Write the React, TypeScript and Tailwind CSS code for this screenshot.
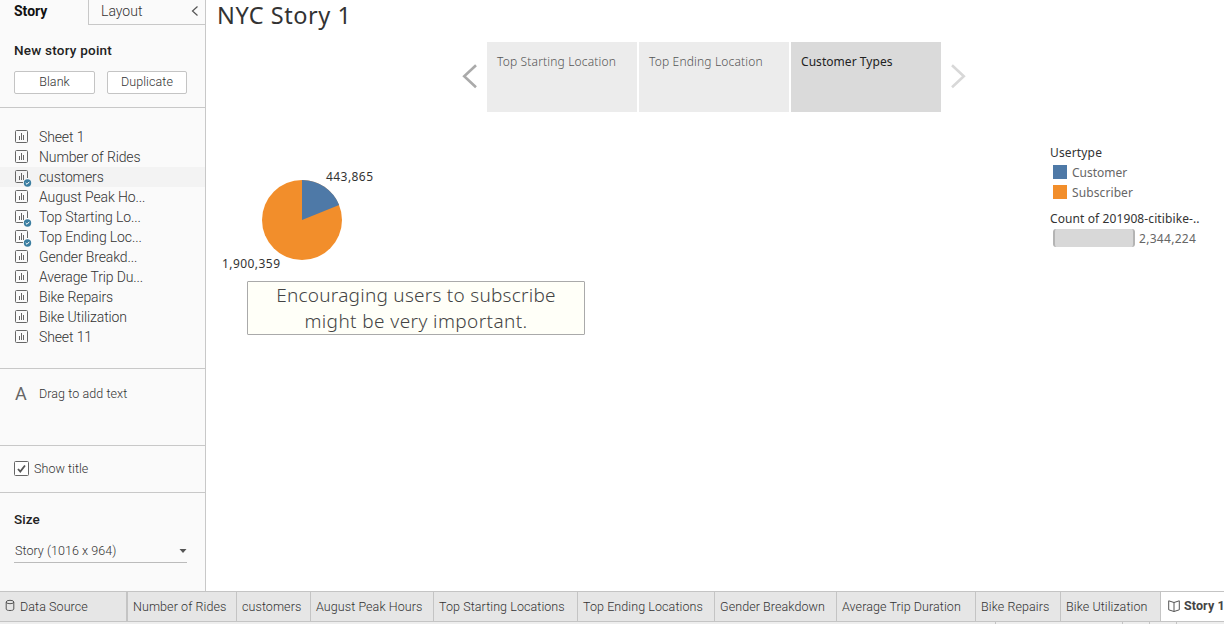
import type { ReactNode } from 'react';

type Sheet = { name: string; used?: boolean; active?: boolean };

const sheets: Sheet[] = [
  { name: 'Sheet 1' },
  { name: 'Number of Rides' },
  { name: 'customers', used: true, active: true },
  { name: 'August Peak Ho...' },
  { name: 'Top Starting Lo...', used: true },
  { name: 'Top Ending Loc...', used: true },
  { name: 'Gender Breakd...' },
  { name: 'Average Trip Du...' },
  { name: 'Bike Repairs' },
  { name: 'Bike Utilization' },
  { name: 'Sheet 11' },
];

const tabs = [
  { name: 'Number of Rides', width: 'w-[109px]' },
  { name: 'customers', width: 'w-[74px]' },
  { name: 'August Peak Hours', width: 'w-[123px]' },
  { name: 'Top Starting Locations', width: 'w-[144px]' },
  { name: 'Top Ending Locations', width: 'w-[137px]' },
  { name: 'Gender Breakdown', width: 'w-[122px]' },
  { name: 'Average Trip Duration', width: 'w-[139px]' },
  { name: 'Bike Repairs', width: 'w-[85px]' },
  { name: 'Bike Utilization', width: 'w-[100px]' },
];

function SheetIcon({ used }: { used?: boolean }) {
  return (
    <svg width="17" height="17" viewBox="0 0 17 17" className="shrink-0" fill="none">
      {used ? (
        <path d="M12.5 8V1.5a1 1 0 0 0-1-1h-10a1 1 0 0 0-1 1v10a1 1 0 0 0 1 1h6.5" stroke="#666" />
      ) : (
        <rect x="0.5" y="0.5" width="12" height="12" rx="1" stroke="#666" />
      )}
      <path d="M4.5 6v4M6.5 3v7M8.5 5v5" stroke="#666" />
      {used && (
        <>
          <circle cx="12.5" cy="13" r="3.7" fill="#3b7ea1" />
          <path d="M10.7 13l1.3 1.3 2.3-2.5" stroke="#fff" strokeWidth="1" />
        </>
      )}
    </svg>
  );
}

function Button({ children, className }: { children: ReactNode; className: string }) {
  return (
    <button className={`h-[23px] rounded-[2px] border border-[#c4c4c4] bg-white pb-px text-[12.5px] leading-[20px] font-light tracking-[0.1px] text-[#333] ${className}`}>
      {children}
    </button>
  );
}

function Sidebar() {
  return (
    <aside className="flex w-[206px] shrink-0 flex-col border-r border-[#c8c8c8] bg-[#fafafa] text-[#333]">
      <div className="flex h-[25px]">
        <div className="w-[88px] pl-[14px] text-[14px] leading-[23px] font-bold text-[#111]">Story</div>
        <div className="flex flex-1 justify-between border-b border-l border-[#c8c8c8] pr-[6px] pl-3 text-[14px] leading-[23px] font-light">
          <span>Layout</span>
          <svg width="8" height="12" viewBox="0 0 8 12" className="mt-[5px]" fill="none">
            <path d="M6.5 1.5L1.5 6l5 4.5" stroke="#555" strokeWidth="1.2" />
          </svg>
        </div>
      </div>
      <section className="h-[83px] border-b border-[#c8c8c8] px-[14px] pt-[16px]">
        <h2 className="text-[13.5px] leading-[19px] font-medium tracking-[0.22px] text-[#222]">New story point</h2>
        <div className="mt-[11px] flex gap-3">
          <Button className="w-[81px]">Blank</Button>
          <Button className="w-[80px]">Duplicate</Button>
        </div>
      </section>
      <section className="h-[261px] border-b border-[#c8c8c8] pt-[19px]">
        {sheets.map((s) => (
          <div key={s.name} className={`flex h-5 items-center pl-[15px] text-[14px] leading-5 font-light tracking-[-0.12px] ${s.active ? 'bg-[#f3f3f3]' : ''}`}>
            <div className="mt-[3px] h-[17px] w-6">
              <SheetIcon used={s.used} />
            </div>
            <span>{s.name}</span>
          </div>
        ))}
      </section>
      <section className="flex h-[77px] items-start border-b border-[#c8c8c8] pt-[15px] pl-[15px]">
        <span className="w-6 text-[18px] leading-5 text-[#666]">A</span>
        <span className="text-[12.5px] leading-5 font-light tracking-[0.08px]">Drag to add text</span>
      </section>
      <section className="flex h-[47px] items-center gap-[5px] border-b border-[#c8c8c8] pl-[14px]">
        <svg width="15" height="15" viewBox="0 0 15 15" className="-mt-px" fill="none">
          <rect x="0.5" y="0.5" width="14" height="14" rx="1" fill="#fff" stroke="#666" />
          <path d="M4 8l2.3 2.6L11 4.5" stroke="#555" strokeWidth="1.8" />
        </svg>
        <span className="text-[12.5px] leading-5 font-light tracking-[0.05px]">Show title</span>
      </section>
      <section className="flex-1 px-[14px] pt-[16px]">
        <h2 className="text-[13.5px] leading-5 font-medium tracking-[0.1px] text-[#222]">Size</h2>
        <div className="mt-[11px] flex h-[23px] w-[173px] items-center justify-between border-b border-[#bbb] pl-px">
          <span className="text-[12.5px] leading-5 font-light tracking-[0.05px]">Story (1016 x 964)</span>
          <svg width="8" height="4" viewBox="0 0 8 4">
            <path d="M0.5 0h7L4 4z" fill="#555" />
          </svg>
        </div>
      </section>
    </aside>
  );
}

function StoryPoint({ label, active }: { label: string; active?: boolean }) {
  return (
    <div className={`h-[70px] w-[150px] px-[10px] pt-[10px] text-[12px] leading-5 ${active ? 'bg-[#dadada] tracking-[0.05px] text-[#222]' : 'bg-[#ececec] font-light tracking-[0.17px] text-[#555]'}`}>
      {label}
    </div>
  );
}

function PieChart() {
  return (
    <svg width="180" height="110" viewBox="0 0 180 110" className="font-[Noto_Sans] text-[12px]" fill="#333">
      <circle cx="87" cy="54" r="40" fill="#f28e2b" />
      <path d="M87 54V14A40 40 0 0 1 124.13 39.12Z" fill="#4e79a7" />
      <text x="111" y="15" textLength="47">443,865</text>
      <text x="7" y="102" textLength="58">1,900,359</text>
    </svg>
  );
}

function Legend() {
  return (
    <div className="mt-[31px] w-[160px] text-[12px] leading-5 text-[#666]">
      <div className="tracking-[0.15px] text-[#333]">Usertype</div>
      <div className="flex items-start gap-[5px] pl-[3px]">
        <span className="mt-[2px] size-[14px] bg-[#4e79a7]" />
        <span>Customer</span>
      </div>
      <div className="flex items-start gap-[5px] pl-[3px]">
        <span className="mt-[2px] size-[14px] bg-[#f28e2b]" />
        <span className="tracking-[0.1px]">Subscriber</span>
      </div>
      <div className="mt-[6px] tracking-[0.1px] whitespace-nowrap text-[#333]">Count of 201908-citibike-..</div>
      <div className="flex items-start gap-1 pl-[3px]">
        <span className="h-[18px] w-[82px] rounded-[3px] border-x-2 border-[#b4b4b4] bg-[#d8d8d8]" />
        <span className="tracking-[0.3px]">2,344,224</span>
      </div>
    </div>
  );
}

function Canvas() {
  return (
    <main className="min-w-0 flex-1 bg-white font-['Noto_Sans',sans-serif]">
      <h1 className="h-[42px] pl-[11px] text-[23.5px] leading-[31px] tracking-[0.55px] text-[#333]">NYC Story 1</h1>
      <div className="flex items-center pl-[255px]">
        <svg width="18" height="26" viewBox="0 0 18 26" className="-mt-[2px]" fill="none">
          <path d="M15 2.2L3.2 13.2l11.8 11" stroke="#aaa" strokeWidth="2.6" />
        </svg>
        <div className="ml-2 flex gap-[2px]">
          <StoryPoint label="Top Starting Location" />
          <StoryPoint label="Top Ending Location" />
          <StoryPoint label="Customer Types" active />
        </div>
        <svg width="18" height="26" viewBox="0 0 18 26" className="-mt-[2px] ml-2" fill="none">
          <path d="M3 2.2l11.8 11L3 24.2" stroke="#d8d8d8" strokeWidth="2.6" />
        </svg>
      </div>
      <div className="flex">
        <div className="w-[844px] pt-[54px] pl-[9px]">
          <PieChart />
          <div className="mt-[5px] ml-8 h-[54px] w-[338px] rounded-[1px] border border-[#aaa] bg-[#fffff8] text-center text-[19px] leading-[26px] font-light tracking-[0.25px] text-[#444]">
            Encouraging users to subscribe
            <br />
            <span className="tracking-[0.4px]">might be very important.</span>
          </div>
        </div>
        <Legend />
      </div>
    </main>
  );
}

function TabBar() {
  return (
    <footer className="h-[33px] border-t border-[#c4c4c4] bg-[#e6e6e6] text-[12.5px] leading-[30px] font-light tracking-[0.08px] whitespace-nowrap text-[#333]">
      <div className="flex h-[30px] border-b border-[#c4c4c4]">
        <div className="flex w-[128px] items-center border-r-2 border-[#c4c4c4] pl-[5px]">
          <svg width="10" height="13" viewBox="0 0 10 13" className="-mt-[2px]" fill="none" stroke="#555">
            <ellipse cx="5" cy="3" rx="3.8" ry="1.7" />
            <path d="M1.2 3v7c0 1 1.5 1.5 3.8 1.5s3.8-.5 3.8-1.5V3" />
          </svg>
          <span className="ml-[5px]">Data Source</span>
        </div>
        {tabs.map((t) => (
          <div key={t.name} className={`shrink-0 border-r border-[#c4c4c4] pl-[5px] ${t.width}`}>{t.name}</div>
        ))}
        <div className="flex flex-1 items-center gap-[5px] overflow-hidden bg-white pb-px pl-[7px] font-bold tracking-normal text-[#444]">
          <svg width="12" height="12" viewBox="0 0 12 12" className="shrink-0" fill="none" stroke="#555">
            <path d="M6 2.5L.7.8v9L6 11.5l5.3-1.7v-9zM6 2.5v9" />
          </svg>
          <span className="-ml-px tracking-[0.1px]">Story 1</span>
        </div>
      </div>
      <div className="flex h-[2px] bg-[#eee]">
        <span className="w-[996px] border-r border-[#c4c4c4]" />
        <span className="w-[127px] border-r border-[#c4c4c4]" />
        <span className="w-[27px] border-r border-[#c4c4c4]" />
        <span className="w-[27px] border-r border-[#c4c4c4]" />
      </div>
    </footer>
  );
}

export default function App() {
  return (
    <div className="flex h-[624px] w-[1224px] flex-col overflow-hidden bg-white font-['Roboto',sans-serif]">
      <div className="flex min-h-0 flex-1">
        <Sidebar />
        <Canvas />
      </div>
      <TabBar />
    </div>
  );
}
